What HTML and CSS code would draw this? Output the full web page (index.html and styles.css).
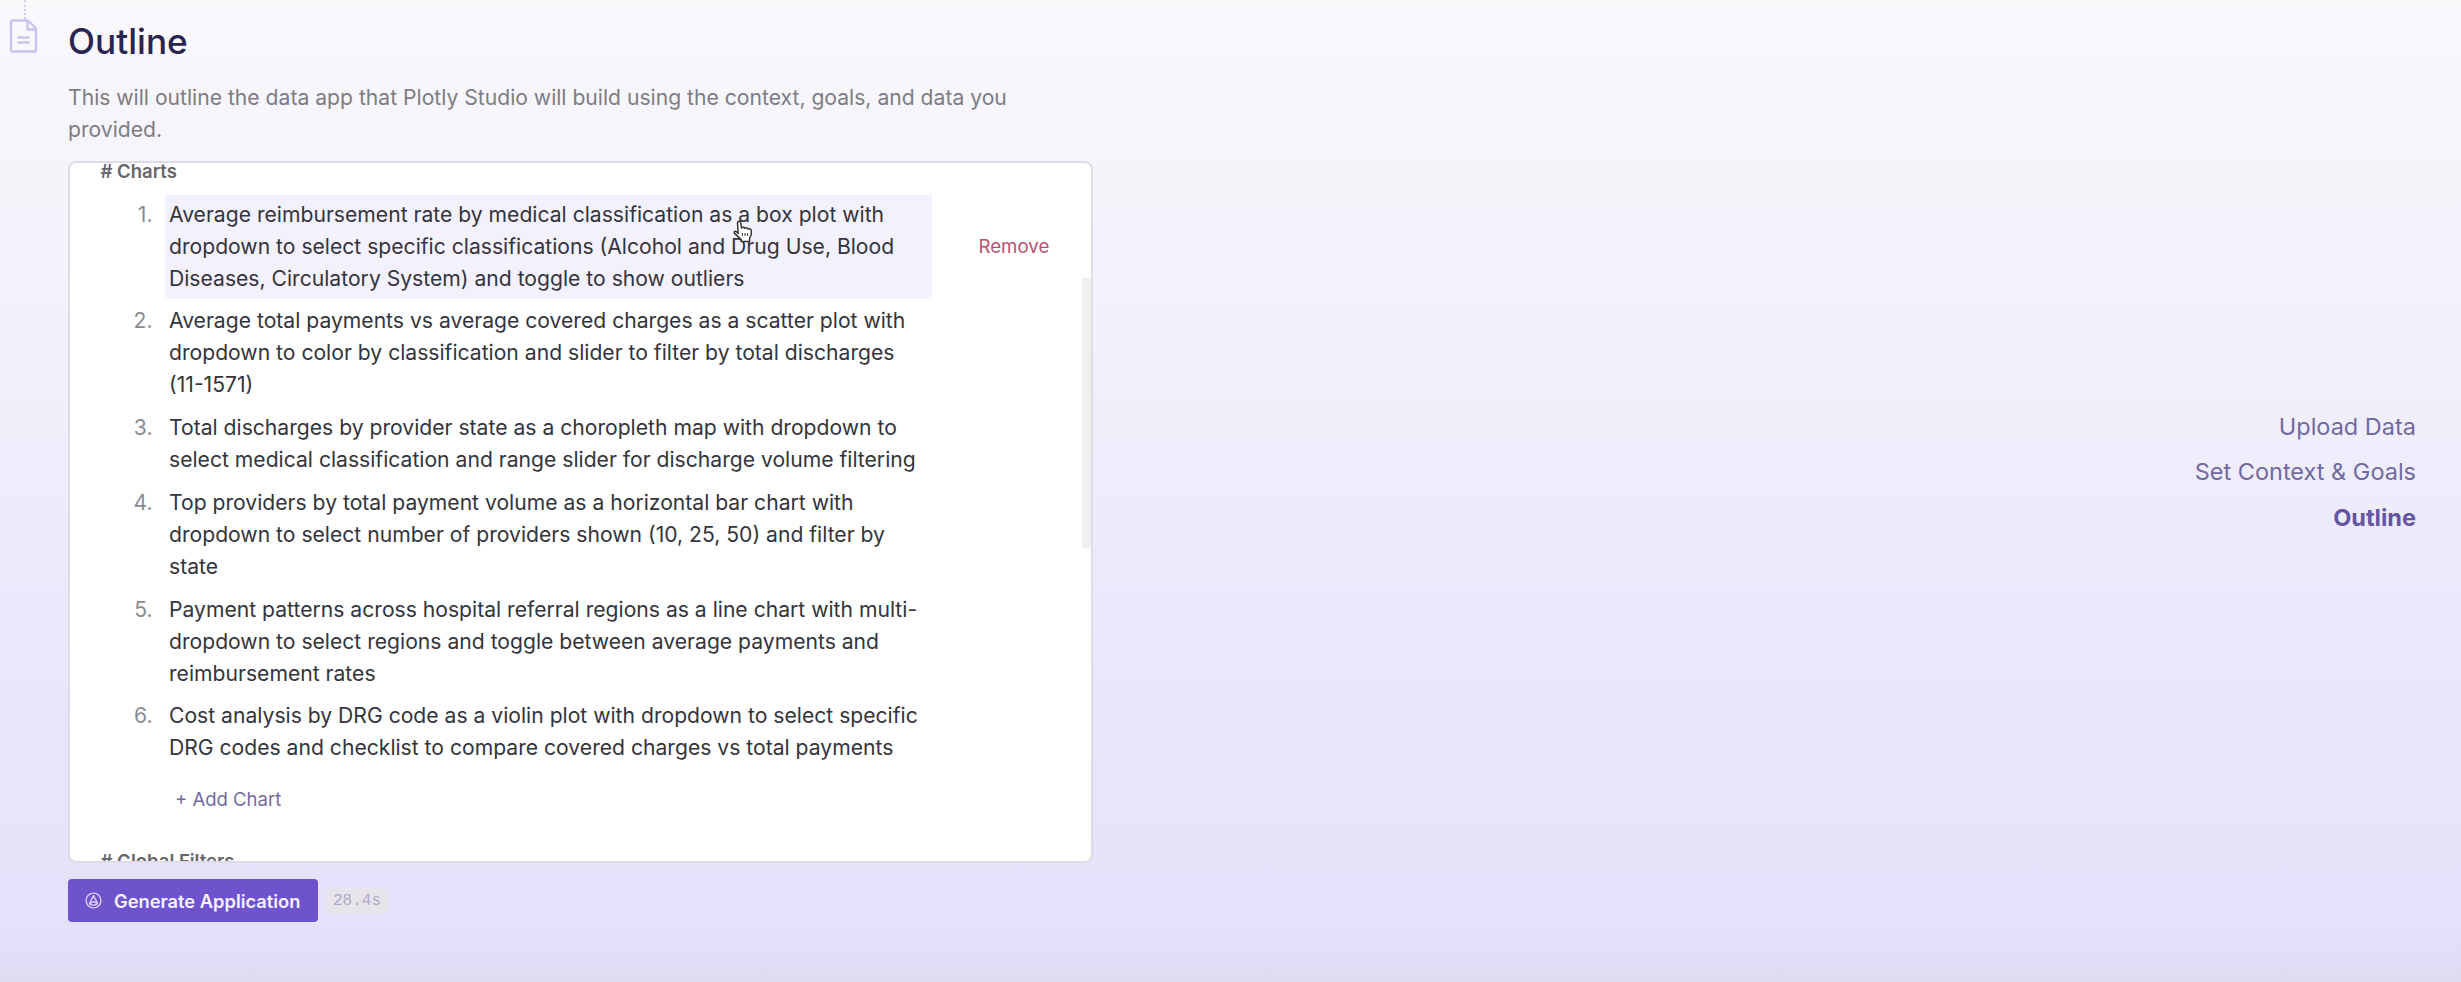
FILE: index.html
```html
<!DOCTYPE html>
<html lang="en">
<head>
  <meta charset="UTF-8">
  <title>Outline</title>
  <meta name="viewport" content="width=device-width, initial-scale=1.0">
  <link rel="stylesheet" href="styles.css">
</head>
<body>

  <div class="page">
    <aside class="rail">
      <div class="rail-line"></div>
      <svg class="rail-icon" viewBox="0 0 28 34" fill="none" stroke="#cdc2ec" stroke-width="2.4" stroke-linejoin="round" stroke-linecap="round">
        <path d="M3 1.5H18.5L26.5 9.5V31a1.5 1.5 0 0 1-1.5 1.5H3A1.5 1.5 0 0 1 1.5 31V3A1.5 1.5 0 0 1 3 1.5Z"/>
        <path d="M18 2V10.5H26.5"/>
        <path d="M9 18.5H19M9 23.5H19"/>
      </svg>
    </aside>

    <main class="content">
      <h1>Outline</h1>
      <p class="intro">This will outline the data app that Plotly Studio will build using the context, goals, and data you<br>provided.</p>

      <section class="editor">
        <h2 class="section-title"># Charts</h2>
        <ol class="charts">
          <li class="chart active">
            <span class="num">1.</span>
            <p class="text">Average reimbursement rate by medical classification as a box plot with<br>dropdown to select specific classifications (Alcohol and Drug Use, Blood<br>Diseases, Circulatory System) and toggle to show outliers</p>
            <a class="remove" href="#">Remove</a>
          </li>
          <li class="chart">
            <span class="num">2.</span>
            <p class="text">Average total payments vs average covered charges as a scatter plot with<br>dropdown to color by classification and slider to filter by total discharges<br>(11-1571)</p>
          </li>
          <li class="chart">
            <span class="num">3.</span>
            <p class="text">Total discharges by provider state as a choropleth map with dropdown to<br>select medical classification and range slider for discharge volume filtering</p>
          </li>
          <li class="chart">
            <span class="num">4.</span>
            <p class="text">Top providers by total payment volume as a horizontal bar chart with<br>dropdown to select number of providers shown (10, 25, 50) and filter by<br>state</p>
          </li>
          <li class="chart">
            <span class="num">5.</span>
            <p class="text">Payment patterns across hospital referral regions as a line chart with multi-<br>dropdown to select regions and toggle between average payments and<br>reimbursement rates</p>
          </li>
          <li class="chart">
            <span class="num">6.</span>
            <p class="text">Cost analysis by DRG code as a violin plot with dropdown to select specific<br>DRG codes and checklist to compare covered charges vs total payments</p>
          </li>
        </ol>
        <a class="add" href="#">+ Add Chart</a>
        <h2 class="section-title"># Global Filters</h2>
        <div class="scrollbar"></div>
      </section>

      <div class="actions">
        <button class="generate" type="button">
          <svg width="17" height="17" viewBox="0 0 17 17" fill="none" stroke="#d9cdf6" stroke-width="1.4" stroke-linejoin="round">
            <circle cx="8.5" cy="8.5" r="7.4"/>
            <path d="M8.5 3.6L12.4 11.4L8.5 9.6L4.6 11.4Z"/>
            <path d="M4.6 11.6Q8.5 14.6 12.4 11.6"/>
          </svg>
          <span>Generate Application</span>
        </button>
        <span class="timer">28.4s</span>
      </div>
    </main>

    <nav class="steps">
      <a href="#">Upload Data</a>
      <a href="#">Set Context &amp; Goals</a>
      <a href="#" class="current">Outline</a>
    </nav>
  </div>

  <svg class="pointer" width="20" height="24" viewBox="0 0 20 24" fill="#fff" stroke="#333" stroke-width="1.5" stroke-linejoin="round">
    <path d="M5.2 13.5L4.5 3.2Q4.6 1.2 6.1 1.2Q7.4 1.2 7.7 3L8.6 8Q10.6 6.5 11.8 8.2Q13.8 7.1 15 9Q18 8.2 18.4 11Q18.8 15.5 16.6 18.2V21.5H8.2V19.6L1.6 13.4Q.6 12 2 11.2Q3.3 10.8 5.2 13.5Z"/>
    <path d="M9.3 13V16M12 13V16M14.6 13V16" stroke-width="1"/>
  </svg>

</body>
</html>
```

FILE: styles.css
```css
:root {
  --purple: #6d54cc;
  --link: #716a9f;
  --ink: #34343b;
}

* {
  box-sizing: border-box;
}

body {
  margin: 0;
  height: 982px;
  overflow: hidden;
  font-family: Inter, "Liberation Sans", sans-serif;
  background: linear-gradient(180deg, #f9f8fb 0%, #f5f3fb 22%, #efedfb 48%, #eae7fc 66%, #e5e1fa 94%, #dfdbf3 100%);
}

a {
  text-decoration: none;
}

h1, h2, p, ol {
  margin: 0;
  padding: 0;
}

.page {
  display: flex;
  height: 982px;
}

.rail {
  width: 68px;
  padding-left: 9px;
}

.rail-line {
  height: 19px;
  margin-left: 15px;
  border-left: 2px dotted #d9cfe6;
}

.rail-icon {
  display: block;
  width: 29px;
  height: 34px;
}

.content {
  width: 1025px;
  padding-top: 17px;
}

h1 {
  font-size: 35.2px;
  line-height: 48px;
  font-weight: 500;
  color: #2a2450;
}

.intro {
  margin-top: 16.5px;
  font-size: 21.13px;
  line-height: 32px;
  white-space: nowrap;
  color: #7d7c84;
}

.editor {
  position: relative;
  height: 702px;
  margin-top: 15px;
  padding: 1px 0 0 30.5px;
  overflow: hidden;
  background: #fff;
  border: 2px solid #dedce7;
  border-radius: 8px;
}

.section-title {
  height: 14px;
  font-size: 18.5px;
  line-height: 14px;
  font-weight: 600;
  color: #66656b;
}

.charts {
  margin-top: 17px;
  list-style: none;
}

.chart {
  display: flex;
  margin-bottom: 2.8px;
}

.num {
  width: 64px;
  padding: 4px 12px 4px 0;
  text-align: right;
  font-size: 21.13px;
  line-height: 32px;
  color: #8b8a91;
}

.text {
  width: 767px;
  padding: 4px 4.5px;
  font-size: 21.13px;
  line-height: 32px;
  white-space: nowrap;
  color: var(--ink);
}

.active .text {
  background: #f4f1fe;
}

.remove {
  align-self: center;
  margin-left: 47px;
  font-size: 18.67px;
  color: #b8506e;
}

.add {
  display: block;
  margin: 17px 0 0 74.5px;
  font-size: 18.5px;
  line-height: 28px;
  color: var(--link);
}

.add + .section-title {
  margin-top: 41px;
}

.scrollbar {
  position: absolute;
  top: 115px;
  right: 0;
  width: 9px;
  height: 270px;
  background: #efeff0;
  border-radius: 2px;
}

.actions {
  display: flex;
  align-items: center;
  margin-top: 16.5px;
}

.generate {
  display: flex;
  align-items: center;
  gap: 12px;
  width: 250px;
  height: 43px;
  padding: 0 0 0 17px;
  border: none;
  border-radius: 4px;
  background: var(--purple);
  color: #f6f2ff;
  font-family: inherit;
  font-size: 18.3px;
  font-weight: 600;
  white-space: nowrap;
}

.timer {
  margin-left: 9px;
  padding: 2px 6px;
  border-radius: 4px;
  background: #e8e5ea;
  color: #b1a9cc;
  font-family: "Liberation Mono", monospace;
  font-size: 16px;
  line-height: 22px;
}

.steps {
  display: flex;
  flex-direction: column;
  align-items: flex-end;
  gap: 13.3px;
  margin-left: auto;
  padding: 411px 45px 0 0;
}

.steps a {
  font-size: 23.5px;
  line-height: 32px;
  color: var(--link);
}

.steps .current {
  font-weight: 700;
  color: #6456a3;
}

/* pointer floats above the list */
.pointer {
  position: absolute;
  left: 733px;
  top: 220px;
}
```
